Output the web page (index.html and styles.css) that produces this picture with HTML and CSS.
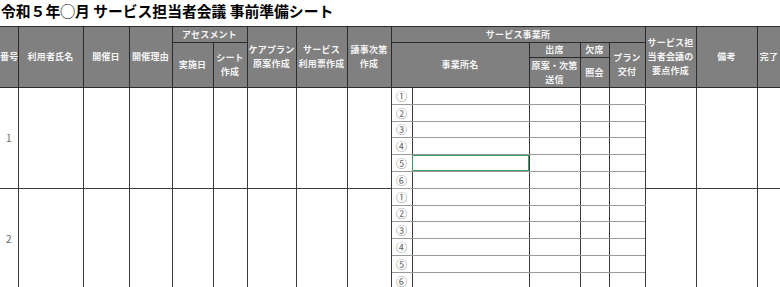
FILE: index.html
```html
<!DOCTYPE html>
<html lang="ja">
<head>
<meta charset="utf-8">
<title>事前準備シート</title>
<link rel="stylesheet" href="styles.css">
</head>
<body>
<div class="page">
  <h1 class="title">令和５年◯月 サービス担当者会議 事前準備シート</h1>
  <table class="sheet">
    <colgroup>
      <col class="c-no"><col class="c-name"><col class="c-date"><col class="c-reason">
      <col class="c-impl"><col class="c-sheet"><col class="c-plan"><col class="c-use">
      <col class="c-agenda"><col class="c-circ"><col class="c-office"><col class="c-send">
      <col class="c-ask"><col class="c-give"><col class="c-summary"><col class="c-note"><col class="c-done">
    </colgroup>
    <thead>
      <tr class="h1">
        <th rowspan="3" class="first">番号</th>
        <th rowspan="3">利用者氏名</th>
        <th rowspan="3">開催日</th>
        <th rowspan="3">開催理由</th>
        <th colspan="2">アセスメント</th>
        <th rowspan="3">ケアプラン<br>原案作成</th>
        <th rowspan="3">サービス<br>利用票作成</th>
        <th rowspan="3">議事次第<br>作成</th>
        <th colspan="5">サービス事業所</th>
        <th rowspan="3">サービス担<br>当者会議の<br>要点作成</th>
        <th rowspan="3">備考</th>
        <th rowspan="3">完了</th>
      </tr>
      <tr class="h2">
        <th rowspan="2">実施日</th>
        <th rowspan="2">シート<br>作成</th>
        <th rowspan="2" colspan="2">事業所名</th>
        <th>出席</th>
        <th>欠席</th>
        <th rowspan="2">プラン<br>交付</th>
      </tr>
      <tr class="h3">
        <th>原案・次第<br>送信</th>
        <th>照会</th>
      </tr>
    </thead>
    <tbody>
      <tr class="sub grp">
        <td rowspan="6" class="first num">1</td>
        <td rowspan="6"></td><td rowspan="6"></td><td rowspan="6"></td><td rowspan="6"></td>
        <td rowspan="6"></td><td rowspan="6"></td><td rowspan="6"></td><td rowspan="6"></td>
        <td class="circ">①</td><td class="s"></td><td class="s"></td><td class="s"></td><td class="s"></td>
        <td rowspan="6"></td><td rowspan="6"></td><td rowspan="6"></td>
      </tr>
      <tr class="sub"><td class="circ">②</td><td class="s"></td><td class="s"></td><td class="s"></td><td class="s"></td></tr>
      <tr class="sub"><td class="circ">③</td><td class="s"></td><td class="s"></td><td class="s"></td><td class="s"></td></tr>
      <tr class="sub"><td class="circ">④</td><td class="s"></td><td class="s"></td><td class="s"></td><td class="s"></td></tr>
      <tr class="sub"><td class="circ">⑤</td><td class="s selected"></td><td class="s"></td><td class="s"></td><td class="s"></td></tr>
      <tr class="sub"><td class="circ">⑥</td><td class="s"></td><td class="s"></td><td class="s"></td><td class="s"></td></tr>

      <tr class="sub grp">
        <td rowspan="6" class="first num">2</td>
        <td rowspan="6"></td><td rowspan="6"></td><td rowspan="6"></td><td rowspan="6"></td>
        <td rowspan="6"></td><td rowspan="6"></td><td rowspan="6"></td><td rowspan="6"></td>
        <td class="circ">①</td><td class="s"></td><td class="s"></td><td class="s"></td><td class="s"></td>
        <td rowspan="6"></td><td rowspan="6"></td><td rowspan="6"></td>
      </tr>
      <tr class="sub"><td class="circ">②</td><td class="s"></td><td class="s"></td><td class="s"></td><td class="s"></td></tr>
      <tr class="sub"><td class="circ">③</td><td class="s"></td><td class="s"></td><td class="s"></td><td class="s"></td></tr>
      <tr class="sub"><td class="circ">④</td><td class="s"></td><td class="s"></td><td class="s"></td><td class="s"></td></tr>
      <tr class="sub"><td class="circ">⑤</td><td class="s"></td><td class="s"></td><td class="s"></td><td class="s"></td></tr>
      <tr class="sub"><td class="circ">⑥</td><td class="s"></td><td class="s"></td><td class="s"></td><td class="s"></td></tr>
    </tbody>
  </table>
</div>
</body>
</html>
```
FILE: styles.css
```css
html, body {
  margin: 0;
  padding: 0;
  background: #ffffff;
}
body {
  font-family: "Noto Sans CJK JP", "Noto Sans", sans-serif;
  overflow: hidden;
  width: 780px;
  height: 287px;
}
.page {
  width: 780px;
  overflow: hidden;
}
.title {
  margin: 0;
  height: 26px;
  padding-left: 1px;
  font-size: 14.8px;
  line-height: 22px;
  font-weight: 700;
  color: #000;
  white-space: nowrap;
}
.sheet {
  border-collapse: collapse;
  table-layout: fixed;
  width: 781px;
}
.c-no { width: 18px; }
.c-name { width: 65px; }
.c-date { width: 46px; }
.c-reason { width: 43px; }
.c-impl { width: 41px; }
.c-sheet { width: 34px; }
.c-plan { width: 49px; }
.c-use { width: 51px; }
.c-agenda { width: 44px; }
.c-circ { width: 21px; }
.c-office { width: 117px; }
.c-send { width: 51px; }
.c-ask { width: 29px; }
.c-give { width: 36px; }
.c-summary { width: 51px; }
.c-note { width: 61px; }
.c-done { width: 24px; }

.sheet th {
  background: #808080;
  color: #f4f4f4;
  font-size: 9px;
  font-weight: 700;
  line-height: 14px;
  padding: 0;
  border: 1px solid #2b2b2b;
  text-align: center;
  vertical-align: middle;
  white-space: nowrap;
  overflow: hidden;
  letter-spacing: 0.2px;
}
.sheet .first {
  border-left: none;
}
.h1 { height: 16px; }
.h2 { height: 15px; }
.h3 { height: 30px; }

.sheet td {
  padding: 0;
  border: 1px solid #3a3a3a;
  background: #fff;
}
.sheet td.s,
.sheet td.circ {
  border-top: 1px solid #9a9a9a;
  border-bottom: 1px solid #9a9a9a;
}
.sheet tr.grp td {
  border-top: 1px solid #2b2b2b;
}
.sub { height: 16.8px; }
.num {
  font-size: 10px;
  color: #666;
  text-align: center;
  vertical-align: middle;
}
.circ {
  font-size: 11px;
  color: #666;
  text-align: center;
  vertical-align: middle;
  line-height: 14px;
}
.sheet td.selected {
  outline: 1px solid #3f9e68;
  outline-offset: -1px;
}
```
